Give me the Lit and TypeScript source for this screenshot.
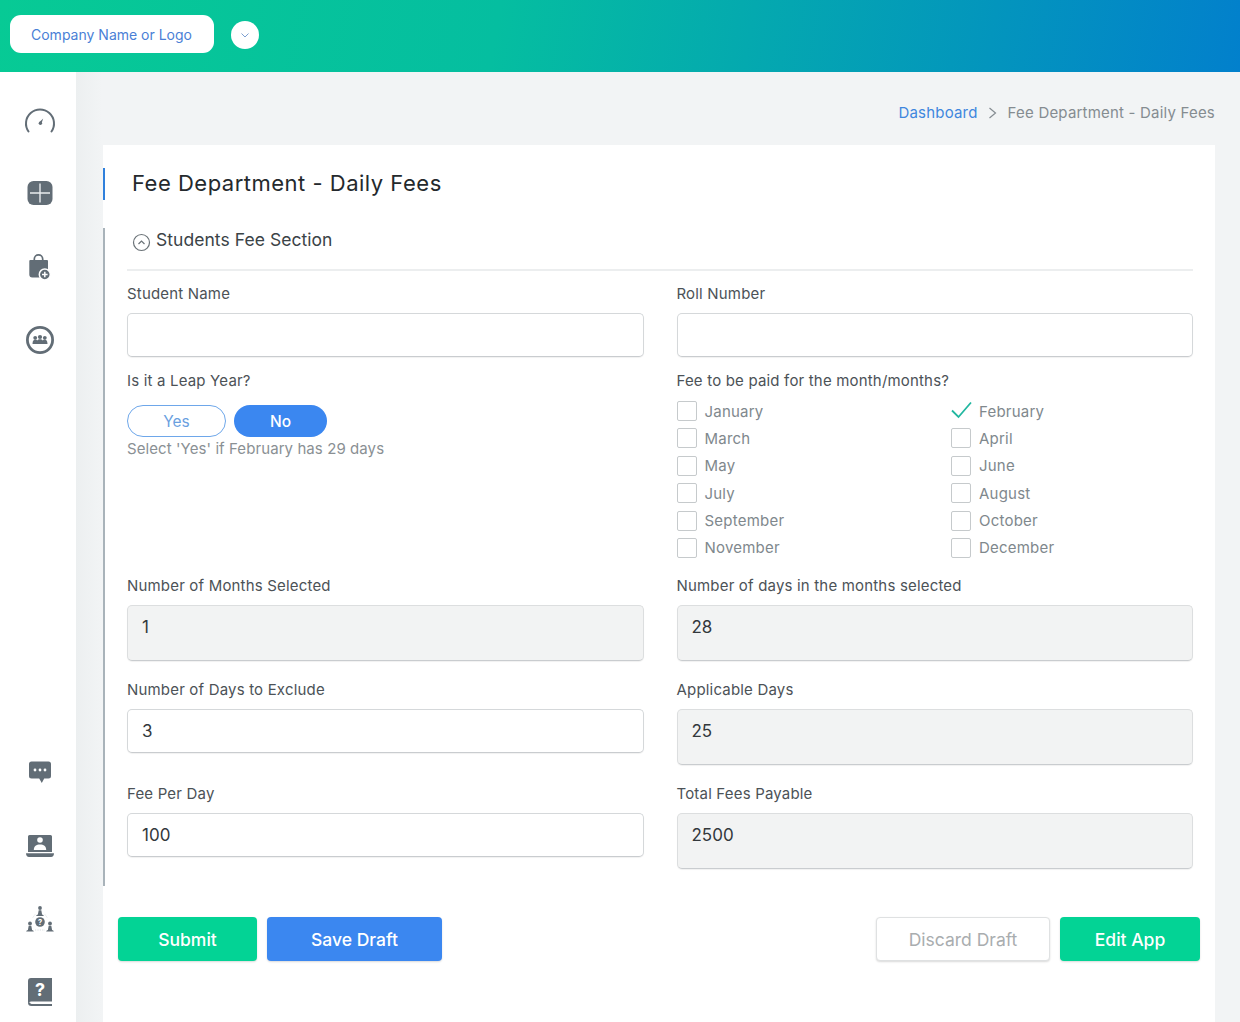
import { LitElement, html, css, svg } from "lit";
import { customElement } from "lit/decorators.js";

const months = ["January","February","March","April","May","June","July","August","September","October","November","December"];

const ink = "#626d76";
const person = (x: number, y: number) => svg`<circle cx="${x}" cy="${y}" r="1.9" fill="${ink}"/><path d="M${x - 3.8} ${y + 8}c0-.8 1-1.1 1.700-1.500l.8-4.200h2.600l.8 4.200c.7.4 1.700.7 1.700 1.500Z" fill="${ink}"/>`;
const icons = [
  svg`<path d="M4.500 27.500A14 14 0 1 1 27.500 27.500" fill="none" stroke="${ink}" stroke-width="2" stroke-linecap="round"/><path d="M15.200 18.200 19.200 14.400 17.400 19.800Z" fill="${ink}"/><circle cx="16.400" cy="19.200" r="1.700" fill="${ink}"/>`,
  svg`<rect x="3.500" y="4" width="25" height="24" rx="6" fill="${ink}"/><path d="M16 6.500v19M6 16h20" stroke="#e9ecee" stroke-width="1.400"/>`,
  svg`<path d="M10.300 9.500V8a4.200 4.200 0 0 1 8.400 0v1.500" fill="none" stroke="${ink}" stroke-width="1.700"/><path d="M6.300 9h16.700a1 1 0 0 1 1 1v16.500H8.300a3 3 0 0 1-3-3V10a1 1 0 0 1 1-1Z" fill="${ink}"/><circle cx="20.800" cy="23.500" r="5.500" fill="${ink}" stroke="#fff" stroke-width="1.500"/><path d="M20.800 20.700v5.600M18 23.500h5.600" stroke="#fff" stroke-width="1.500"/>`,
  svg`<circle cx="16" cy="16" r="12.600" fill="none" stroke="${ink}" stroke-width="2.800"/><circle cx="11.200" cy="13.800" r="1.900" fill="${ink}"/><circle cx="16" cy="13" r="2.100" fill="${ink}"/><circle cx="20.800" cy="13.800" r="1.900" fill="${ink}"/><path d="M8.500 20c0-3.200 1.500-4.400 2.700-4.400 1 0 1.600.3 2 .8.600-.7 1.600-1.100 2.800-1.100s2.200.4 2.800 1.100c.4-.5 1-.8 2-.8 1.200 0 2.700 1.200 2.700 4.400Z" fill="${ink}"/>`,
  svg`<path d="M7.500 5.500h17a2.500 2.500 0 0 1 2.500 2.500v12a2.500 2.500 0 0 1-2.500 2.500h-4.300L17.800 27l-2.600-4.500H7.500A2.500 2.500 0 0 1 5 20V8a2.500 2.500 0 0 1 2.500-2.500Z" fill="${ink}"/><circle cx="11" cy="14" r="1.400" fill="#fff"/><circle cx="16" cy="14" r="1.400" fill="#fff"/><circle cx="21" cy="14" r="1.400" fill="#fff"/>`,
  svg`<path d="M5.500 6h21A1.500 1.500 0 0 1 28 7.500V23H4V7.500A1.500 1.500 0 0 1 5.500 6Z" fill="${ink}"/><circle cx="16" cy="11" r="2.800" fill="#fff"/><path d="M9.800 21c0-3.600 2.600-5.400 6.200-5.400s6.200 1.800 6.200 5.400Z" fill="#fff"/><path d="M2 24.300h28c0 2.200-1.200 3.700-3 3.700H5c-1.800 0-3-1.500-3-3.700Z" fill="${ink}"/>`,
  svg`${person(16, 5)}${person(6, 20.500)}${person(26, 20.500)}<circle cx="16" cy="19" r="4.800" fill="${ink}"/><text x="16" y="21.700" text-anchor="middle" font-family="Inter, sans-serif" font-weight="700" font-size="7.500" fill="#fff">?</text><path d="M11 11.500 8.500 15M21 11.500l2.500 3.500M11 27h10" fill="none" stroke="#c9ced2" stroke-width=".7" stroke-dasharray="1.200 1.200"/>`,
  svg`<path d="M7 2h21v23.500H7.500A3.500 3.500 0 0 0 4 29V5a3 3 0 0 1 3-3Z" fill="${ink}"/><path d="M4 26.500A3.500 3.500 0 0 0 7.500 30H28v-2H8a2 2 0 0 1-2-1.500Z" fill="${ink}"/><text x="16" y="19.500" text-anchor="middle" font-family="Inter, sans-serif" font-weight="700" font-size="18" fill="#fff">?</text>`,
];

@customElement("app-root")
export class AppRoot extends LitElement {
  static styles = css`
    :host { display: block; height: 1022px; overflow: hidden; font-family: Inter, "Liberation Sans", sans-serif; color: #4b5358; background: #f2f4f5; }
    * { box-sizing: border-box; }
    .top { height: 72px; display: flex; align-items: center; gap: 17px; padding: 0 0 2px 10px; background: linear-gradient(100deg, #07ca95 0%, #05bea0 40%, #0280cc 100%); }
    .logo { width: 204px; height: 38px; margin-bottom: 2px; border-radius: 11px; background: #fff; color: #4a7fd6; font-size: 14px; display: flex; align-items: center; justify-content: center; padding-right: 1px; }
    .drop { width: 28px; height: 28px; border-radius: 50%; background: #fff; display: flex; align-items: center; justify-content: center; }
    .body { display: flex; height: 950px; }
    .side { width: 76px; flex: none; background: #fff; display: flex; flex-direction: column; justify-content: space-between; align-items: center; padding: 31.500px 0 14px 4px; }
    .group { display: flex; flex-direction: column; gap: 41.500px; }
    .bottom { gap: 41.500px; }
    .group svg { display: block; width: 32px; height: 32px; }
    .main { flex: 1; min-width: 0; padding-left: 27px; padding-right: 25px; background: linear-gradient(90deg, #eceff0 0, #f2f4f5 26px); }
    .crumbs { height: 73px; display: flex; justify-content: flex-end; align-items: center; padding-top: 8px; font-size: 15px; letter-spacing: .2px; color: #858c91; gap: 10px; }
    .crumbs a { color: #3f87de; }
    .card { background: #fff; height: 877px; padding-top: 23px; }
    h1 { margin: 0; font-weight: 400; color: #24292d; font-size: 22px; letter-spacing: .5px; height: 32px; line-height: 30px; border-left: 2px solid #2f80dc; padding-left: 27px; }
    .sec { margin-top: 28px; border-left: 2px solid #a9b3ba; padding: 0 22px 17px 22px; }
    .sec-head { height: 43px; border-bottom: 2px solid #eceeef; display: flex; align-items: flex-start; gap: 5px; padding: 1px 0 0 5px; font-size: 17.500px; letter-spacing: .05px; color: #3b4347; line-height: 21px; }
    .sec-head svg { width: 19px; height: 19px; margin-top: 4px; }
    .grid { display: grid; grid-template-columns: 517px 516.500px; column-gap: 32.500px; }
    .r1 { margin-top: 13px; } .r2 { margin-top: 14px; } .r3 { margin-top: 11px; } .r4, .r5 { margin-top: 19px; }
    .lbl { height: 20px; line-height: 20px; font-size: 15px; letter-spacing: .18px; color: #4c5257; }
    .field .lbl { margin-bottom: 9px; }
    .input { height: 44px; border: 1px solid #d5d8da; border-bottom-color: #c9cccf; border-radius: 5px; background: #fff; padding: 0 14px; display: flex; align-items: center; font-size: 17px; color: #33383c; box-shadow: 0 1px 1px rgba(0,0,0,.06); }
    .ro { height: 56px; align-items: flex-start; padding-top: 9px; background: #f2f3f3; line-height: 24px; border-color: #dcdedf; border-bottom-color: #c9cccf; }
    .toggles { display: flex; gap: 8px; margin-top: 14px; }
    .pill { height: 32px; border-radius: 16px; display: flex; align-items: center; justify-content: center; font-size: 15.500px; }
    .yes { width: 99px; border: 1.500px solid #6ea7ea; color: #6a9fdf; background: #fff; }
    .no { width: 93px; background: #3b87f0; color: #fff; font-weight: 500; }
    .hint { margin-top: 2px; font-size: 15px; letter-spacing: .08px; color: #8a9094; line-height: 20px; }
    .checks { display: grid; grid-template-columns: 274.500px 1fr; grid-auto-rows: 27.400px; margin-top: 10px; }
    .check { display: flex; align-items: center; gap: 8px; font-size: 15px; letter-spacing: .22px; color: #80888d; height: 20px; }
    .box { width: 20px; height: 20px; border: 1.500px solid #c6cacc; border-radius: 2px; flex: none; background: #fff; }
    .tick { width: 20px; height: 20px; flex: none; overflow: visible; }
    .actions { display: flex; margin-top: 31px; padding: 0 15px; gap: 10px; }
    .btn { height: 44px; border-radius: 4px; display: flex; align-items: center; justify-content: center; font-size: 17.500px; font-weight: 500; color: #fff; box-shadow: 0 1px 2px rgba(0,0,0,.15); }
    .green { background: #03d395; width: 139px; }
    .wide { width: 140px; }
    .blue { background: #3b87f0; width: 175px; }
    .ghost { background: #fff; width: 174px; color: #a9adaf; border: 1px solid #dfe1e2; font-weight: 400; margin-left: auto; }
  `;

  field(name: string, value: string, kind = "") {
    return html`<div class="field"><div class="lbl">${name}</div><div class="input ${kind}">${value}</div></div>`;
  }

  render() {
    return html`
      <div class="top">
        <div class="logo">Company Name or Logo</div>
        <div class="drop"><svg width="12" height="12" viewBox="0 0 12 12"><path d="M2.500 4.500 6 8l3.500-3.500" fill="none" stroke="#7d9fd0" stroke-width="1"/></svg></div>
      </div>
      <div class="body">
        <div class="side">
          <div class="group">${icons.slice(0, 4).map((i) => html`<svg viewBox="0 0 32 32">${i}</svg>`)}</div>
          <div class="group bottom">${icons.slice(4).map((i) => html`<svg viewBox="0 0 32 32">${i}</svg>`)}</div>
        </div>
        <div class="main">
          <div class="crumbs">
            <a>Dashboard</a>
            <svg width="10" height="14" viewBox="0 0 10 14"><path d="M1.500 2 7.500 7l-6 5" fill="none" stroke="#858c91" stroke-width="1.200"/></svg>
            <span>Fee Department - Daily Fees</span>
          </div>
          <div class="card">
            <h1>Fee Department - Daily Fees</h1>
            <div class="sec">
              <div class="sec-head">
                <svg viewBox="0 0 19 19"><circle cx="9.500" cy="9.500" r="8" fill="none" stroke="#6b7378" stroke-width="1.200"/><path d="M6.500 11 9.500 8l3 3" fill="none" stroke="#6b7378" stroke-width="1.200"/></svg>
                <span>Students Fee Section</span>
              </div>
              <div class="grid r1">
                ${this.field("Student Name", "")}
                ${this.field("Roll Number", "")}
              </div>
              <div class="grid r2">
                <div>
                  <div class="lbl">Is it a Leap Year?</div>
                  <div class="toggles"><div class="pill yes">Yes</div><div class="pill no">No</div></div>
                  <div class="hint">Select 'Yes' if February has 29 days</div>
                </div>
                <div>
                  <div class="lbl">Fee to be paid for the month/months?</div>
                  <div class="checks">
                    ${months.map((m) => html`<div class="check">
                      ${m === "February"
                        ? html`<svg class="tick" viewBox="0 0 20 20"><path d="M1 9.500 7.500 16 20 1.500" fill="none" stroke="#22b7a0" stroke-width="1.800"/></svg>`
                        : html`<span class="box"></span>`}
                      <span>${m}</span></div>`)}
                  </div>
                </div>
              </div>
              <div class="grid r3">
                ${this.field("Number of Months Selected", "1", "ro")}
                ${this.field("Number of days in the months selected", "28", "ro")}
              </div>
              <div class="grid r4">
                ${this.field("Number of Days to Exclude", "3")}
                ${this.field("Applicable Days", "25", "ro")}
              </div>
              <div class="grid r5">
                ${this.field("Fee Per Day", "100")}
                ${this.field("Total Fees Payable", "2500", "ro")}
              </div>
            </div>
            <div class="actions">
              <div class="btn green">Submit</div>
              <div class="btn blue">Save Draft</div>
              <div class="btn ghost">Discard Draft</div>
              <div class="btn green wide">Edit App</div>
            </div>
          </div>
        </div>
      </div>
    `;
  }
}
